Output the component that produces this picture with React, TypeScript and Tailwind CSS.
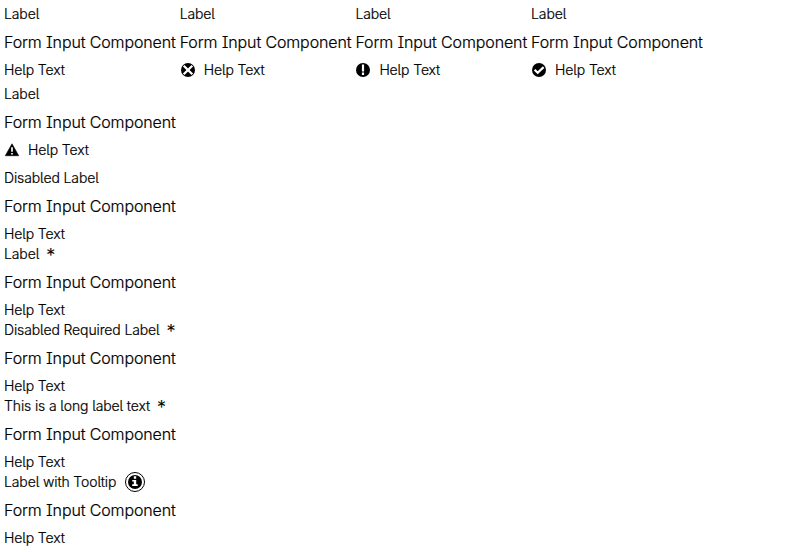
import React from "react";

type Status = "error" | "info" | "success" | "warning";

function StatusIcon({ status }: { status: Status }) {
  return (
    <svg width="16" height="16" viewBox="0 0 16 16" className="mr-2 shrink-0">
      {status === "warning" ? (
        <>
          <path d="M8 1.8 14.7 13.7H1.3Z" fill="#000" stroke="#000" strokeWidth="0.6" strokeLinejoin="round" />
          <path d="M8 5.3v4.4M8 11v1.6" stroke="#fff" strokeWidth="1.7" />
        </>
      ) : (
        <circle cx="8" cy="8" r="7" fill="#000" />
      )}
      {status === "error" && <path d="m3.7 3.7 8.6 8.6m0-8.6-8.6 8.6" stroke="#fff" strokeWidth="2.3" />}
      {status === "info" && <path d="M8 2.6v6.8M8 10.6v2.4" stroke="#fff" strokeWidth="2.2" />}
      {status === "success" && <path d="m3.6 7.8 3.1 3 5.9-5.7" fill="none" stroke="#fff" strokeWidth="2.2" />}
    </svg>
  );
}

function TooltipIcon() {
  return (
    <svg width="20" height="20" viewBox="0 0 20 20" className="ml-[8.5px] shrink-0">
      <circle cx="10" cy="10" r="9.5" fill="#fff" stroke="#000" />
      <circle cx="10" cy="10" r="7" fill="#000" />
      <path d="M8.8 4.3h2.4v2.4H8.8zM7.2 7.9h4v4.4h1.5V14H7.2v-1.7h1.6V9.6H7.2z" fill="#fff" />
    </svg>
  );
}

interface FieldProps {
  label?: string;
  status?: Status;
  required?: boolean;
  tooltip?: boolean;
  className?: string;
}

function Field({ label = "Label", status, required, tooltip, className = "" }: FieldProps) {
  return (
    <div className={className}>
      <div className="flex h-5 items-center text-sm leading-5 tracking-[-0.009em]">
        <span>{label}</span>
        {required && <span className="ml-[7px] pt-[3px] text-lg leading-5">*</span>}
        {tooltip && <TooltipIcon />}
      </div>
      <div className="mt-2 h-5 text-base leading-5 tracking-[-0.0078em]">Form Input Component</div>
      <div className="mt-2 flex h-5 items-center text-sm leading-5 tracking-[-0.009em]">
        {status && <StatusIcon status={status} />}
        <span>Help Text</span>
      </div>
    </div>
  );
}

export default function App() {
  return (
    <main className="h-[552px] overflow-hidden bg-white pl-1 pt-1 font-['Inter',sans-serif] font-light text-black [font-feature-settings:'cv05','cv08'] [-webkit-text-stroke:0.2px_#000]">
      <div className="flex gap-1 whitespace-nowrap">
        <Field />
        <Field status="error" />
        <Field status="info" />
        <Field status="success" />
      </div>
      <Field status="warning" className="mt-1" />
      <Field label="Disabled Label" className="mt-2" />
      <Field required />
      <Field label="Disabled Required Label" required />
      <Field label="This is a long label text" required />
      <Field label="Label with Tooltip" tooltip />
    </main>
  );
}
